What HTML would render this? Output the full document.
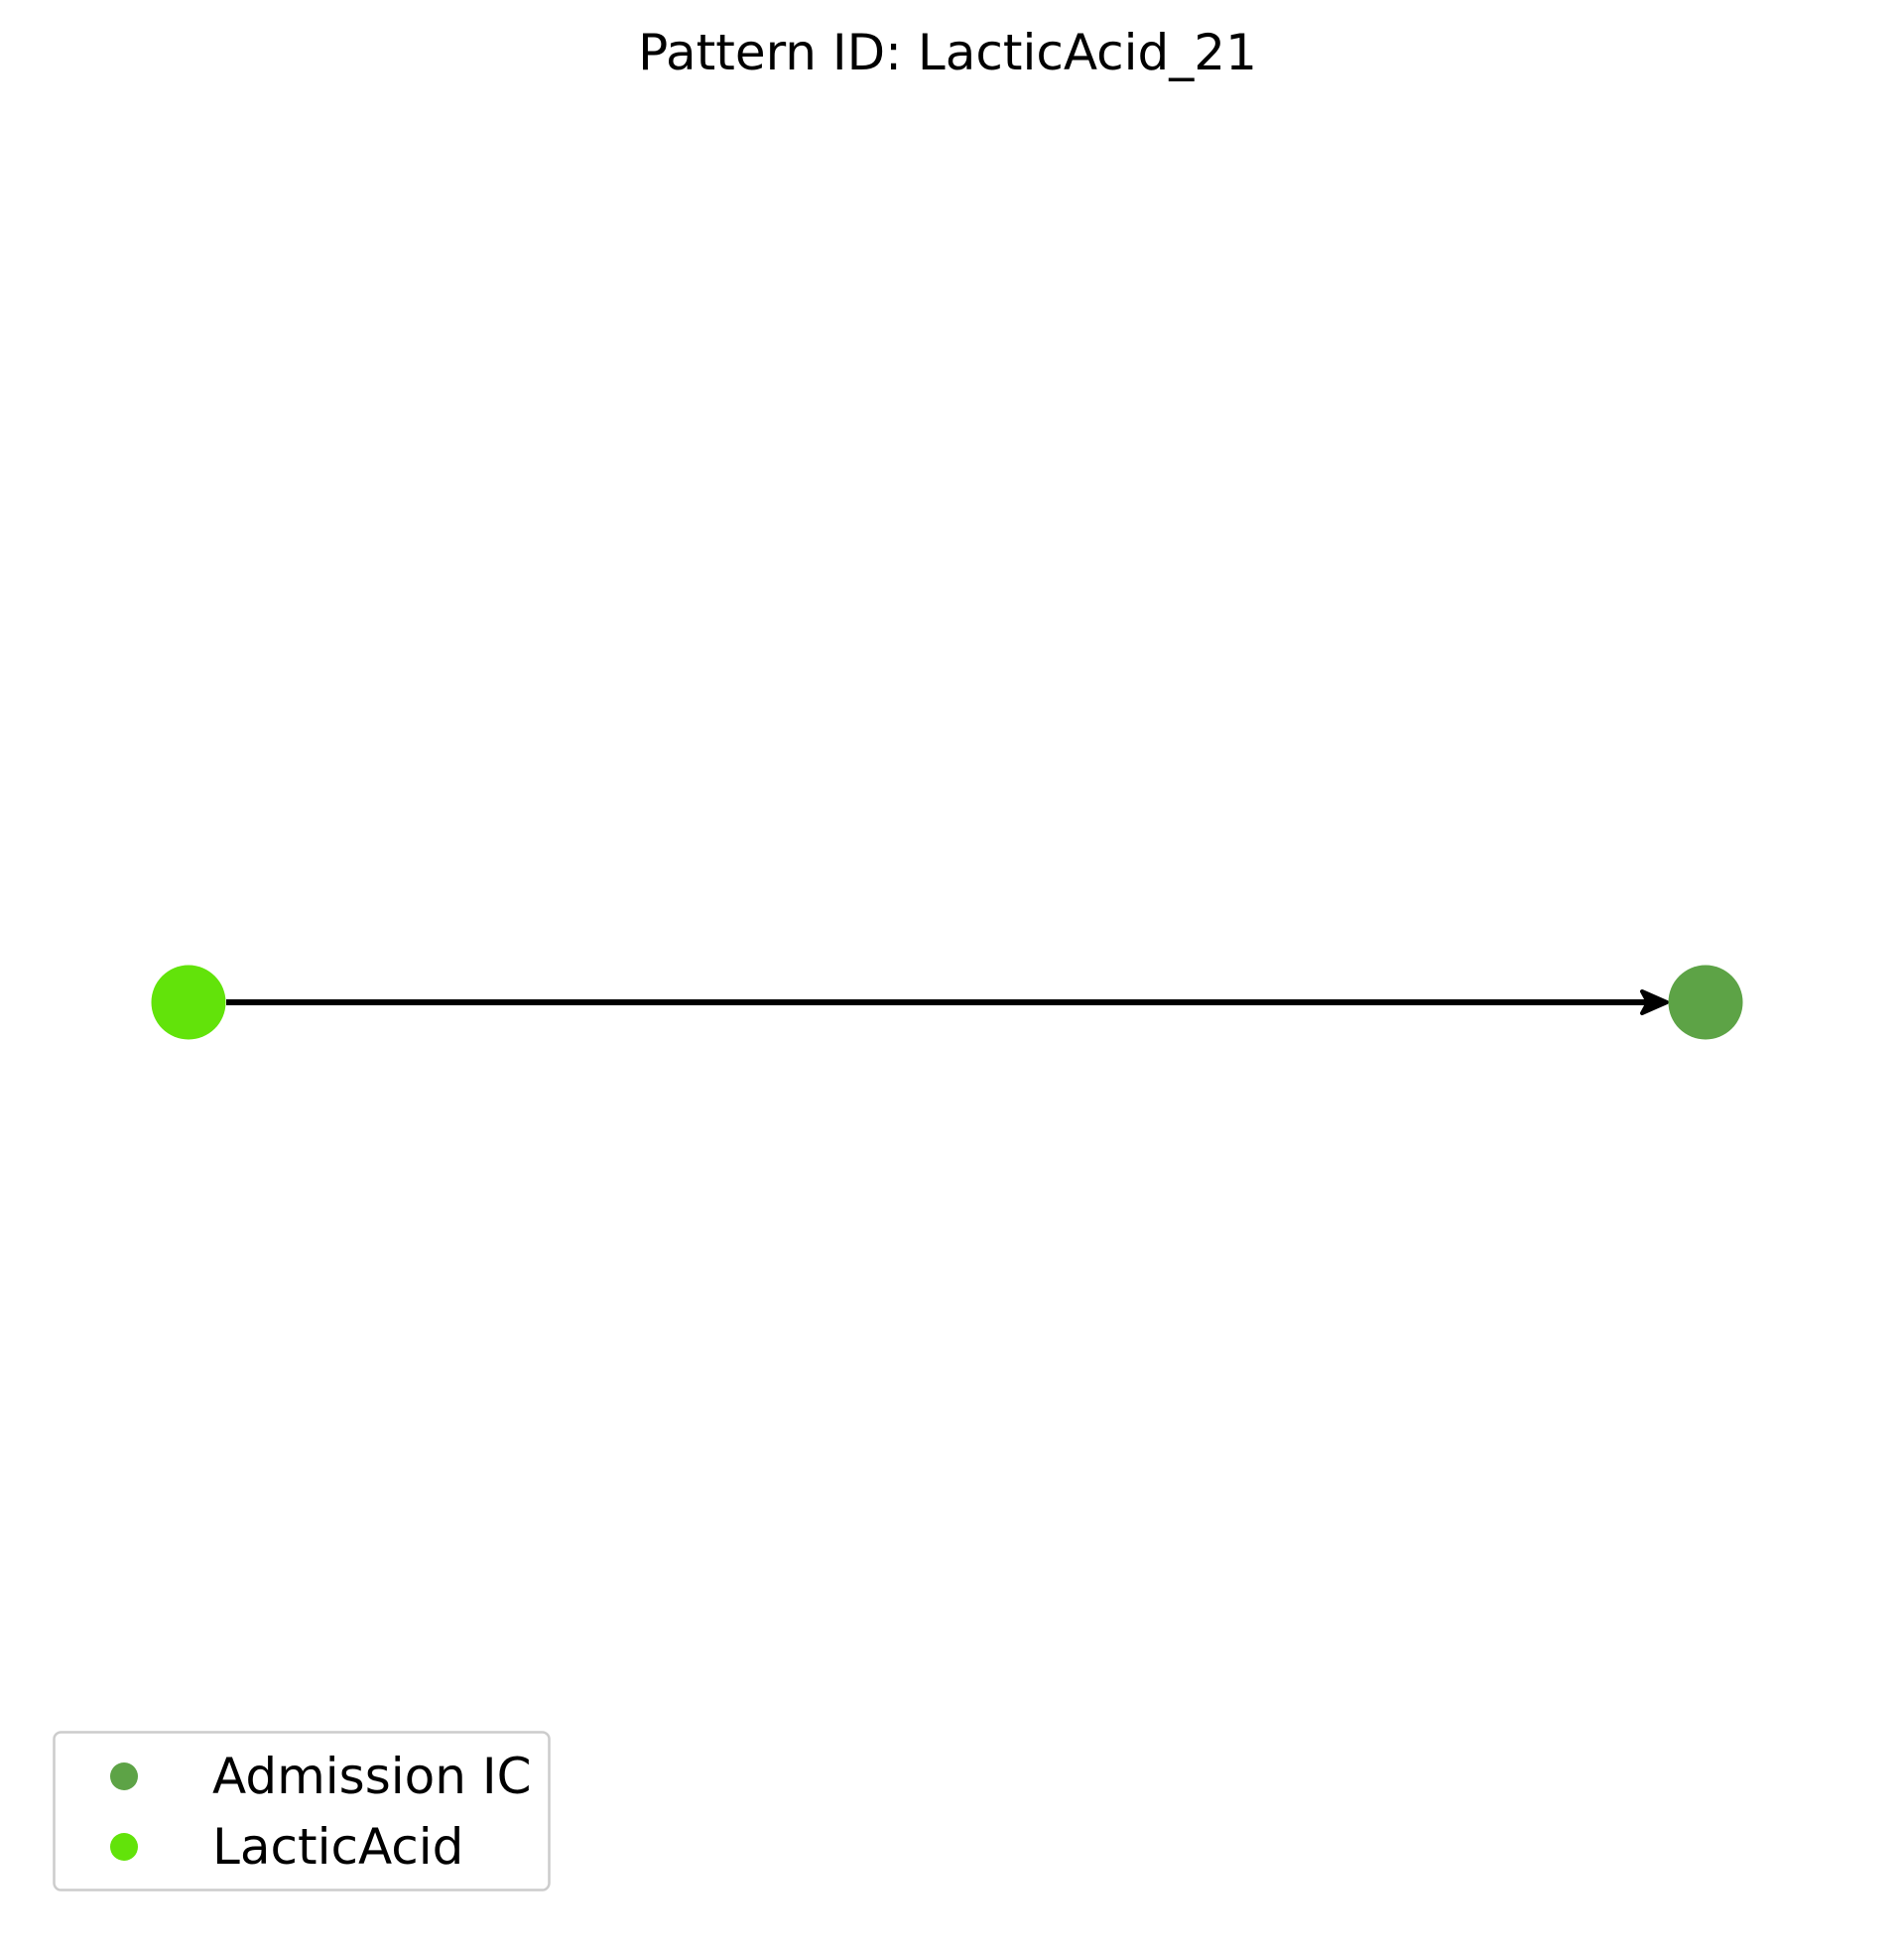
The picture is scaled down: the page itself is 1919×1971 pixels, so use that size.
<!DOCTYPE html>
<html><head><meta charset="utf-8"><style>
html,body{margin:0;padding:0;background:#fff;}
body{width:1919px;height:1971px;overflow:hidden;position:relative;}
svg{position:absolute;left:0;top:0;}
</style></head><body>
<svg width="1919" height="1971" viewBox="0 0 1919 1971" xmlns="http://www.w3.org/2000/svg">
<text x="955" y="70" text-anchor="middle" font-family="DejaVu Sans, Liberation Sans, sans-serif" font-size="50" fill="#000">Pattern ID: LacticAcid_21</text>
<line x1="228" y1="1010" x2="1668" y2="1010" stroke="#000" stroke-width="6"/>
<path d="M1655 999 L1680 1010 L1655 1021 L1661 1010 Z" fill="#000" stroke="#000" stroke-width="4" stroke-linejoin="round"/>
<circle cx="190" cy="1010" r="37.5" fill="#62e30a"/>
<circle cx="1719" cy="1010" r="37.5" fill="#5da346"/>
<rect x="54.5" y="1745.5" width="499" height="159" rx="7" fill="#fff" stroke="#cccccc" stroke-width="2.5"/>
<circle cx="125" cy="1790" r="14" fill="#5da346"/>
<circle cx="125" cy="1861" r="14" fill="#62e30a"/>
<text x="214" y="1807" font-family="DejaVu Sans, Liberation Sans, sans-serif" font-size="50" fill="#000">Admission IC</text>
<text x="214" y="1878" font-family="DejaVu Sans, Liberation Sans, sans-serif" font-size="50" fill="#000">LacticAcid</text>
</svg>
</body></html>
